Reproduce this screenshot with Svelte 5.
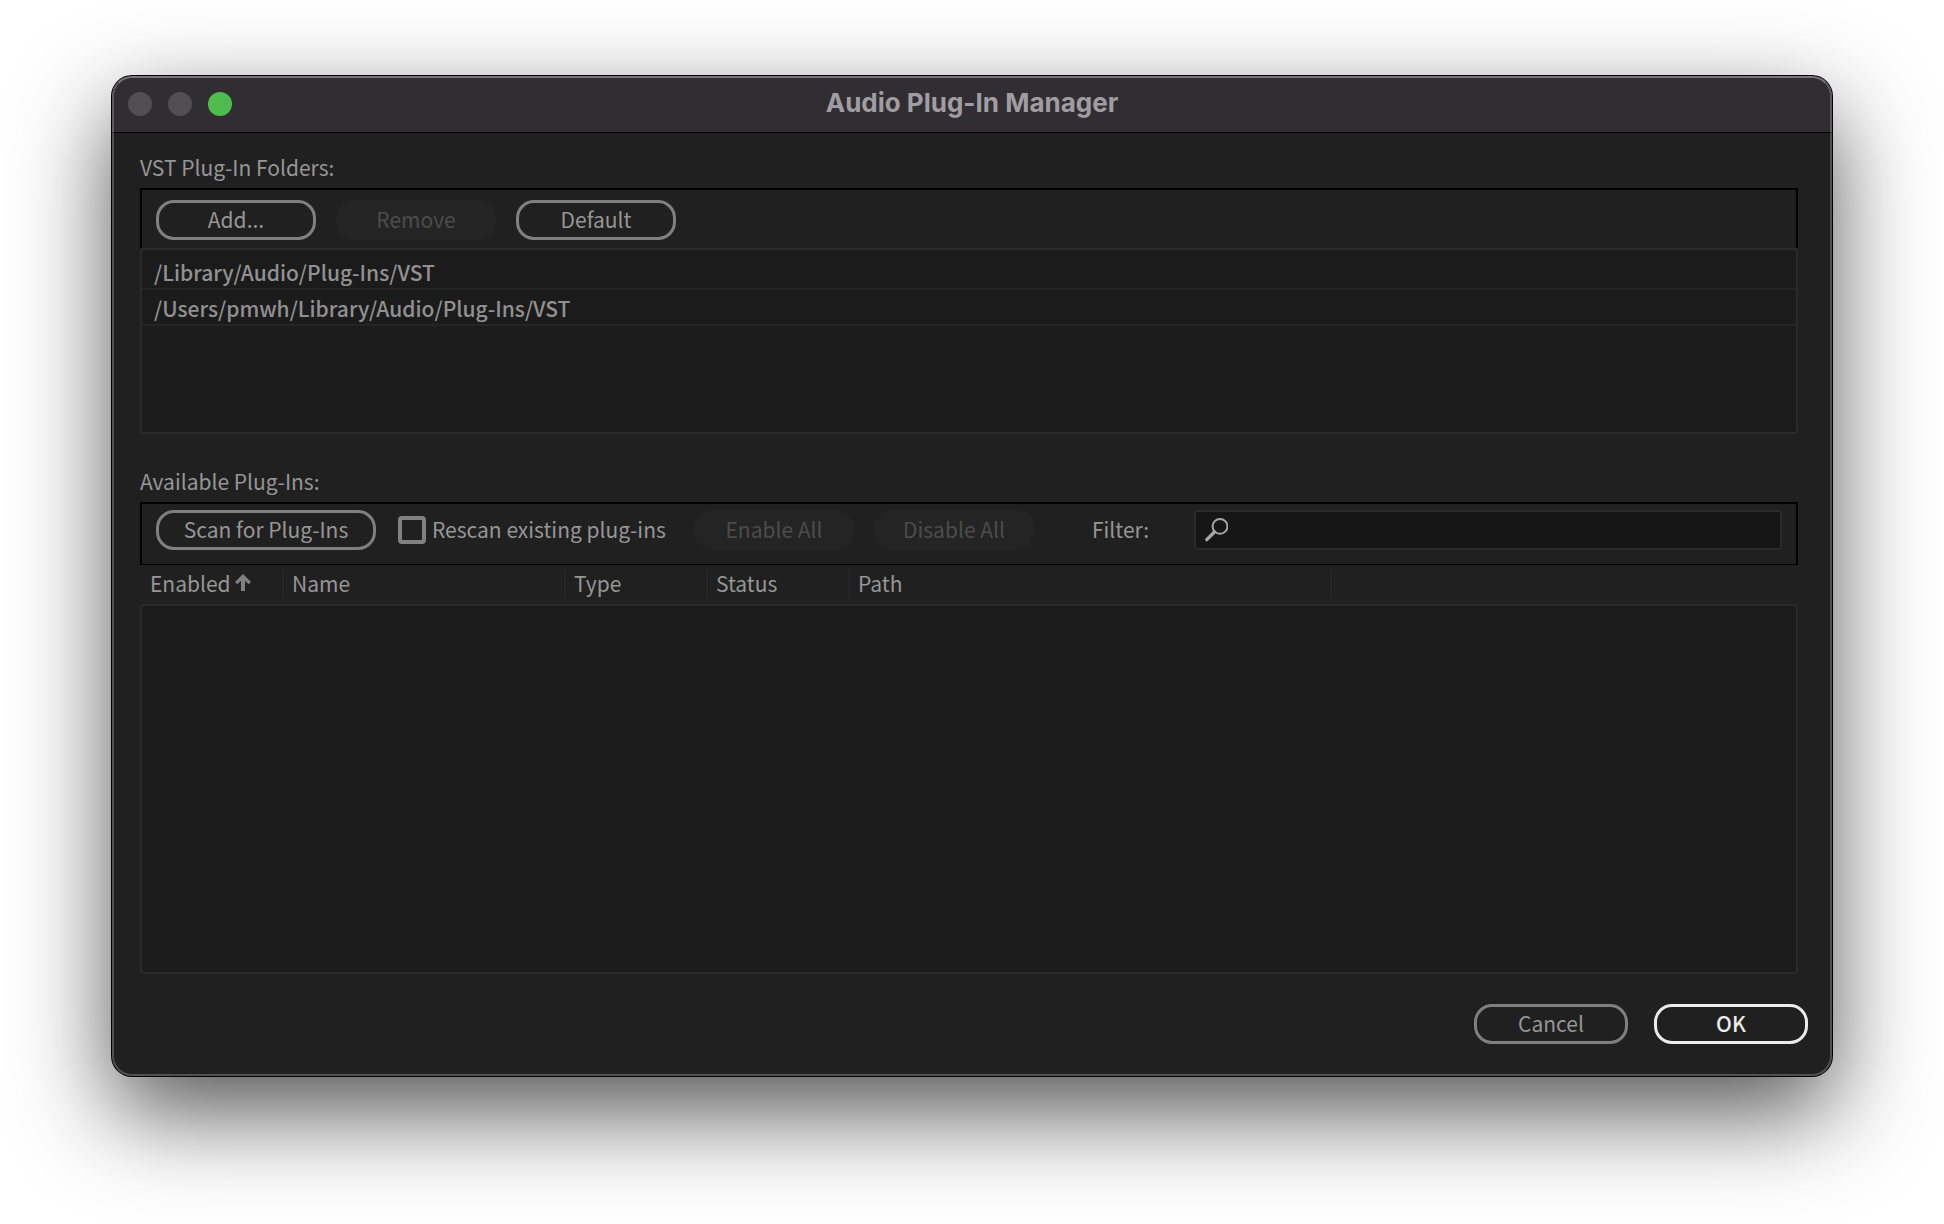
<script>
  let folders = [
    "/Library/Audio/Plug-Ins/VST",
    "/Users/pmwh/Library/Audio/Plug-Ins/VST",
  ];

  const columns = [
    { id: "enabled", label: "Enabled" },
    { id: "name", label: "Name" },
    { id: "type", label: "Type" },
    { id: "status", label: "Status" },
    { id: "path", label: "Path" },
  ];

  let sortColumn = "enabled";
  let rescan = false;
  let filter = "";
</script>

<svelte:head>
  <title>Audio Plug-In Manager</title>
</svelte:head>

<main>
  <div class="window" role="dialog" aria-labelledby="title">
    <header>
      <div class="lights">
        <button class="light" aria-label="Close" disabled></button>
        <button class="light" aria-label="Minimize" disabled></button>
        <button class="light zoom" aria-label="Zoom"></button>
      </div>
      <h1 id="title">Audio Plug-In Manager</h1>
    </header>

    <div class="content">
      <section>
        <h2>VST Plug-In Folders:</h2>
        <div class="toolbar folders-bar">
          <button class="btn">Add...</button>
          <button class="btn" disabled>Remove</button>
          <button class="btn">Default</button>
        </div>
        <ul>
          {#each folders as folder}
            <li>{folder}</li>
          {/each}
        </ul>
      </section>

      <section>
        <h2>Available Plug-Ins:</h2>
        <div class="toolbar plugins-bar">
          <button class="btn scan">Scan for Plug-Ins</button>
          <label class="check">
            <input type="checkbox" bind:checked={rescan} />
            <span>Rescan existing plug-ins</span>
          </label>
          <button class="btn" disabled>Enable All</button>
          <button class="btn" disabled>Disable All</button>
          <label class="filter-label" for="filter">Filter:</label>
          <div class="search">
            <svg width="24" height="24" viewBox="0 0 24 24" aria-hidden="true">
              <circle cx="16" cy="8.4" r="7.4" fill="none" stroke="#a6a6a6" stroke-width="2" />
              <path d="M10.4 14 2.8 21.6" stroke="#a6a6a6" stroke-width="3.4" stroke-linecap="round" />
            </svg>
            <input id="filter" type="text" bind:value={filter} autocomplete="off" />
          </div>
        </div>

        <table>
          <colgroup>
            {#each columns as column}
              <col class={column.id} />
            {/each}
            <col />
          </colgroup>
          <thead>
            <tr>
              {#each columns as column}
                <th scope="col">
                  <div class="head">
                    {column.label}
                    {#if sortColumn === column.id}
                      <svg width="16" height="18" viewBox="0 0 16 18" aria-hidden="true">
                        <path d="M8 0 16 8 13.6 10.2 10 6.8V17H6V6.8L2.4 10.2 0 8Z" fill="#808080" />
                      </svg>
                    {/if}
                  </div>
                </th>
              {/each}
              <td></td>
            </tr>
          </thead>
          <tbody>
            <tr>
              <td class="empty" colspan={columns.length + 1}></td>
            </tr>
          </tbody>
        </table>
      </section>
    </div>

    <footer>
      <button class="btn">Cancel</button>
      <button class="btn primary">OK</button>
    </footer>
  </div>
</main>

<style>
  :global(body) {
    margin: 0;
    background: #ffffff;
  }

  main {
    padding: 76px 112px 148px;
    overflow: hidden;
    font-family: "Noto Sans CJK SC", "Open Sans", sans-serif;
    font-size: 21px;
    line-height: 28px;
    color: #969696;
  }

  .window {
    position: relative;
    border-radius: 20px;
    background: #202020;
    box-shadow:
      0 0 0 1px #000000,
      0 36px 96px rgba(0, 0, 0, 0.68);
  }

  /* light rim drawn over the title bar and the body */
  .window::after {
    content: "";
    position: absolute;
    inset: 0;
    border: 2px solid rgba(255, 255, 255, 0.22);
    border-top-color: rgba(255, 255, 255, 0.34);
    border-radius: 20px;
    pointer-events: none;
  }

  header {
    display: grid;
    grid-template-columns: 1fr auto 1fr;
    align-items: center;
    height: 56px;
    padding: 0 16px;
    border-bottom: 1px solid #000000;
    border-radius: 20px 20px 0 0;
    background: #312e33;
  }

  .lights {
    display: flex;
    gap: 16px;
  }

  .light {
    width: 24px;
    height: 24px;
    padding: 0;
    border: none;
    border-radius: 50%;
    background: #514f54;
  }

  .light.zoom {
    background: #4fbd4b;
  }

  h1 {
    margin: 0;
    padding-bottom: 2px;
    font-family: Inter, sans-serif;
    font-size: 26px;
    font-weight: 700;
    line-height: 28px;
    color: #a09da2;
  }

  .content {
    display: flex;
    flex-direction: column;
    gap: 32px;
    padding: 19px 34px 0 28px;
  }

  h2 {
    margin: 0 0 6px;
    font-size: 21px;
    font-weight: 400;
    line-height: 30px;
  }

  .toolbar {
    display: flex;
    box-sizing: border-box;
    align-items: center;
    padding: 0 14px;
    border: 2px solid #000000;
  }

  .folders-bar {
    gap: 20px;
    height: 60px;
    padding-top: 2px;
    border-bottom: none;
  }

  .plugins-bar {
    height: 63px;
    padding-bottom: 8px;
    border-bottom-width: 1px;
  }

  .btn {
    flex: none;
    width: 160px;
    height: 40px;
    padding: 0 0 2px;
    border: 3px solid #808080;
    border-radius: 18px;
    background: none;
    font: inherit;
    color: #969696;
  }

  .btn:disabled {
    border-color: #242424;
    background: #242424;
    color: #4c4c4c;
  }

  .btn:not(:disabled):hover {
    background: #2a2a2a;
  }

  .plugins-bar .btn + .btn {
    margin-left: 20px;
  }

  .btn.scan {
    width: 220px;
  }

  .btn.primary {
    border-color: #ebebeb;
    font-weight: 500;
    color: #ebebeb;
  }

  ul {
    box-sizing: border-box;
    min-height: 186px;
    margin: 0;
    padding: 4px 0 0;
    border: 2px solid #2a2a2a;
    border-radius: 4px;
    background: #1b1b1b;
    font-weight: 500;
    color: #919191;
    list-style: none;
  }

  li {
    padding: 4px 12px 2px;
    border-bottom: 2px solid #252525;
  }

  .check {
    display: flex;
    align-items: center;
    gap: 6px;
    width: 296px;
    margin-left: 22px;
  }

  .check span {
    padding-bottom: 2px;
    white-space: nowrap;
  }

  .check input {
    appearance: none;
    width: 28px;
    height: 28px;
    margin: 0;
    border: 4px solid #808080;
    border-radius: 4px;
  }

  .check input:checked {
    background: #808080;
  }

  .filter-label {
    width: 102px;
    margin-left: 58px;
    padding-bottom: 2px;
  }

  .search {
    display: flex;
    align-items: center;
    flex: 1;
    gap: 8px;
    height: 36px;
    padding: 0 8px;
    border: 2px solid #2a2a2a;
    border-radius: 4px;
    background: #161616;
  }

  .search input {
    flex: 1;
    min-width: 0;
    padding: 0;
    border: none;
    outline: none;
    background: none;
    font: inherit;
    color: inherit;
  }

  table {
    width: 100%;
    table-layout: fixed;
    border-collapse: separate;
    border-spacing: 0;
  }

  col.enabled {
    width: 144px;
  }

  col.name {
    width: 282px;
  }

  col.type,
  col.status {
    width: 142px;
  }

  col.path {
    width: 482px;
  }

  th {
    padding: 5px 0 6px;
    font-weight: 400;
    text-align: left;
  }

  .head {
    display: flex;
    gap: 4px;
    height: 28px;
    padding-left: 8px;
    border-right: 2px solid #252525;
    line-height: 26px;
  }

  th:first-child .head {
    padding-left: 10px;
  }

  .head svg {
    margin-top: 4px;
  }

  .empty {
    height: 366px;
    padding: 0;
    border: 2px solid #2a2a2a;
    border-radius: 4px;
    background: #1b1b1b;
  }

  footer {
    display: flex;
    justify-content: flex-end;
    gap: 26px;
    padding: 30px 24px 32px;
  }

  footer .btn {
    width: 154px;
  }
</style>
